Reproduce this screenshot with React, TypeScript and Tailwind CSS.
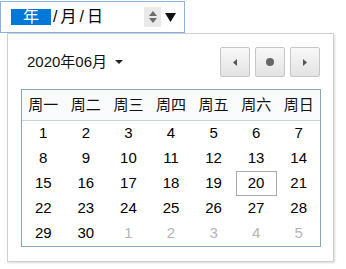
import React from "react";

const weekdays = ["周一", "周二", "周三", "周四", "周五", "周六", "周日"];

const weeks: { d: number; muted?: boolean; today?: boolean }[][] = [
  [1, 2, 3, 4, 5, 6, 7].map((d) => ({ d })),
  [8, 9, 10, 11, 12, 13, 14].map((d) => ({ d })),
  [15, 16, 17, 18, 19, 20, 21].map((d) => ({ d, today: d === 20 })),
  [22, 23, 24, 25, 26, 27, 28].map((d) => ({ d })),
  [
    { d: 29 },
    { d: 30 },
    { d: 1, muted: true },
    { d: 2, muted: true },
    { d: 3, muted: true },
    { d: 4, muted: true },
    { d: 5, muted: true },
  ],
];

function NavButton({ children }: { children: React.ReactNode }) {
  return (
    <button className="w-[30px] h-[30px] flex items-center justify-center border border-[#c6c6c6] rounded-[2px] bg-gradient-to-b from-[#f8f8f8] to-[#e3e3e3]">
      {children}
    </button>
  );
}

export default function App() {
  return (
    <div
      className="w-[346px] h-[269px] bg-white overflow-hidden"
      style={{ fontFamily: '"Liberation Sans", Arial, "Noto Sans CJK SC", sans-serif' }}
    >
      {/* date input */}
      <div className="mt-[1px] w-[185px] h-[32px] border border-[#8fb2dc] flex items-center pl-[10px] pr-[8px] text-[16px] text-black">
        <span className="bg-[#0078d7] text-white w-[40px] h-[16px] leading-[16px] flex items-center justify-center">年</span>
        <span className="ml-[2px] tracking-[3px]">/月/日</span>
        <div className="ml-auto flex items-center gap-[4px]">
          <div className="w-[17px] h-[20px] bg-[#e9e9e9] flex flex-col items-center justify-center gap-[2px]">
            <svg width="8" height="5" viewBox="0 0 8 5"><path d="M0 5 L4 0 L8 5 Z" fill="#6b6b6b" /></svg>
            <svg width="8" height="5" viewBox="0 0 8 5"><path d="M0 0 L4 5 L8 0 Z" fill="#6b6b6b" /></svg>
          </div>
          <svg width="11" height="9" viewBox="0 0 11 9"><path d="M0 0 L11 0 L5.5 9 Z" fill="#111" /></svg>
        </div>
      </div>

      {/* popup */}
      <div className="ml-[7px] w-[327px] h-[229px] border border-[#cfcfcf] shadow-[1px_1px_2px_rgba(0,0,0,0.15)] px-[13px] pt-[13px]">
        <div className="flex items-center justify-between h-[30px]">
          <div className="flex items-center pl-[6px] text-[15px] text-[#111]">
            <span>2020年06月</span>
            <svg className="ml-[8px]" width="8" height="4" viewBox="0 0 8 4"><path d="M0 0 L8 0 L4 4 Z" fill="#222" /></svg>
          </div>
          <div className="flex gap-[5px]">
            <NavButton>
              <svg width="4" height="7" viewBox="0 0 4 7"><path d="M4 0 L0 3.5 L4 7 Z" fill="#555" /></svg>
            </NavButton>
            <NavButton>
              <span className="w-[8px] h-[8px] rounded-full bg-[#666]" />
            </NavButton>
            <NavButton>
              <svg width="4" height="7" viewBox="0 0 4 7"><path d="M0 0 L4 3.5 L0 7 Z" fill="#555" /></svg>
            </NavButton>
          </div>
        </div>

        <div className="mt-[12px] w-[300px] border border-[#8aa6bd]">
          <div className="grid grid-cols-7 h-[31px] items-center border-b border-[#c9d3dc] bg-[#f9fbfd] text-[15px] text-[#111]">
            {weekdays.map((w) => (
              <div key={w} className="text-center">{w}</div>
            ))}
          </div>
          {weeks.map((week, i) => (
            <div key={i} className="grid grid-cols-7 h-[25px] items-center text-[15px]">
              {week.map((c, j) => (
                <div key={j} className="flex justify-center">
                  <span
                    className={
                      c.today
                        ? "w-[41px] h-[25px] flex items-center justify-center border border-[#a9a9a9] text-black"
                        : c.muted
                        ? "text-[#b4b4b4]"
                        : "text-black"
                    }
                  >
                    {c.d}
                  </span>
                </div>
              ))}
            </div>
          ))}
        </div>
      </div>
    </div>
  );
}
